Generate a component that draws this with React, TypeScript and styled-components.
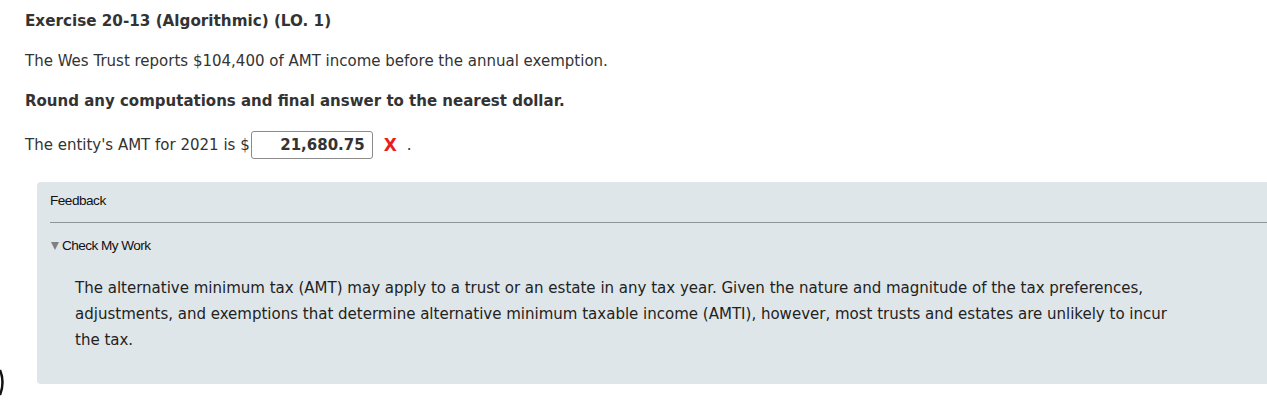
import React from "react";
import styled, { createGlobalStyle } from "styled-components";

const Global = createGlobalStyle`
  html, body { margin: 0; padding: 0; background: #ffffff; }
  body { overflow: hidden; width: 1267px; height: 400px; position: relative; }
`;

const Page = styled.div`
  padding: 12px 0 0 25px;
  font-family: "DejaVu Sans", Verdana, sans-serif;
  color: #333333;
  font-size: 15px;
`;

const Title = styled.h1`
  margin: 0;
  font-size: 15.2px;
  font-weight: bold;
  line-height: 18px;
  color: #333333;
`;

const Para = styled.p<{ $bold?: boolean }>`
  margin: 22px 0 0;
  font-size: 15px;
  line-height: 18px;
  font-weight: ${(p) => (p.$bold ? "bold" : "normal")};
`;

const AnswerRow = styled.div`
  margin-top: 21px;
  display: flex;
  align-items: center;
  font-size: 15px;
  height: 28px;
`;

const Input = styled.div`
  box-sizing: border-box;
  width: 122px;
  height: 28px;
  margin-left: 1px;
  border: 1px solid #8a8a8a;
  border-radius: 3px;
  display: flex;
  align-items: center;
  justify-content: flex-end;
  padding-right: 7px;
  font-weight: bold;
  font-size: 15px;
  color: #333333;
  background: #fff;
`;

const Wrong = styled.span`
  color: #ec1c1c;
  font-weight: bold;
  font-size: 17px;
  line-height: 18px;
  font-family: "DejaVu Sans", sans-serif;
  margin-left: 11px;
`;

const Dot = styled.span`
  margin-left: 10px;
`;

const Panel = styled.section`
  margin: 23px -20px 0 12px;
  background: #dfe6e9;
  border-radius: 4px;
  padding: 11px 13px 32px;
`;

const PanelHead = styled.div`
  font-family: "Liberation Sans", Arial, sans-serif;
  font-size: 13.6px;
  color: #111111;
  line-height: 16px;
  padding-bottom: 13px;
  border-bottom: 1px solid #8f9699;
  letter-spacing: -0.5px;
`;

const Toggle = styled.div`
  margin-top: 15px;
  display: flex;
  align-items: center;
  font-family: "Liberation Sans", Arial, sans-serif;
  font-size: 13.6px;
  color: #111111;
  line-height: 16px;
  letter-spacing: -0.55px;
`;

const Tri = styled.span`
  width: 0;
  height: 0;
  border-left: 4.5px solid transparent;
  border-right: 4.5px solid transparent;
  border-top: 8px solid #808080;
  margin: 0 3px 0 1px;
`;

const Body = styled.p`
  margin: 20px 0 0 25px;
  max-width: 1112px;
  font-family: "DejaVu Sans Condensed", Tahoma, sans-serif;
  font-size: 16.7px;
  line-height: 26px;
  color: #222222;
`;

const EdgeMark = styled.svg`
  position: absolute;
  left: 0;
  top: 369px;
`;

export default function App() {
  return (
    <>
      <Global />
      <Page>
        <Title>Exercise 20-13 (Algorithmic) (LO. 1)</Title>
        <Para>The Wes Trust reports $104,400 of AMT income before the annual exemption.</Para>
        <Para $bold>Round any computations and final answer to the nearest dollar.</Para>
        <AnswerRow>
          <span>The entity's AMT for 2021 is $</span>
          <Input>21,680.75</Input>
          <Wrong>X</Wrong>
          <Dot>.</Dot>
        </AnswerRow>
        <Panel>
          <PanelHead>Feedback</PanelHead>
          <Toggle>
            <Tri />
            Check My Work
          </Toggle>
          <Body>
            The alternative minimum tax (AMT) may apply to a trust or an estate in any tax year. Given the nature and
            magnitude of the tax preferences, adjustments, and exemptions that determine alternative minimum taxable
            income (AMTI), however, most trusts and estates are unlikely to incur the tax.
          </Body>
        </Panel>
      </Page>
      <EdgeMark width="6" height="28" viewBox="0 0 6 28">
        <path d="M0 1 Q5 13 0 26" stroke="#111" strokeWidth="2.5" fill="none" />
      </EdgeMark>
    </>
  );
}
